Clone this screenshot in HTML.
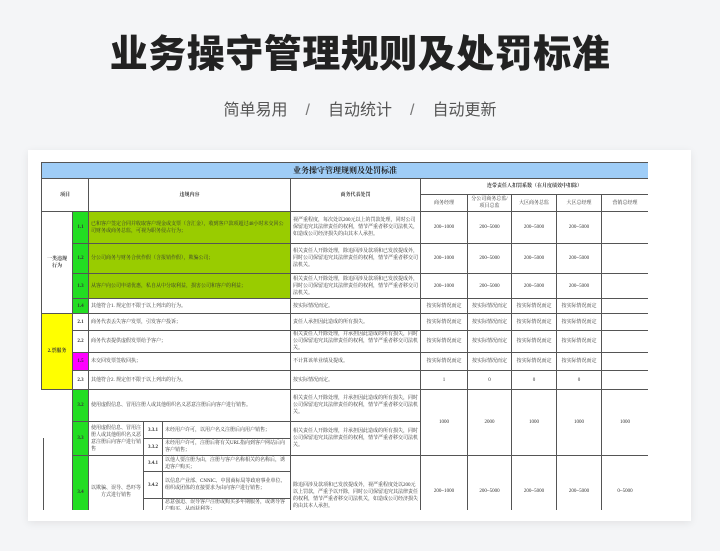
<!DOCTYPE html>
<html><head><meta charset="utf-8">
<style>
*{margin:0;padding:0;box-sizing:border-box}
body{width:720px;height:551px;background:#f4f5f7;position:relative;overflow:hidden;font-family:"Liberation Sans","Noto Sans CJK SC",sans-serif}
h1{position:absolute;top:31px;left:0;width:720px;text-align:center;font-size:38px;font-weight:900;color:#222;letter-spacing:0.5px;line-height:48px}
.sub{position:absolute;top:100px;left:0;width:720px;text-align:center;font-size:16px;color:#555;line-height:22px}
.sub span{margin:0 18px;color:#777}
.card{position:absolute;left:28px;top:150px;width:663px;height:371px;background:#fff;box-shadow:0 2px 8px rgba(0,0,0,.08)}
.wrap{position:absolute;left:41px;top:162px;width:607px;height:348px;overflow:hidden}
table{border-collapse:collapse;table-layout:fixed;width:607px;font-family:"Liberation Serif","Noto Serif CJK SC",serif;font-size:5px;color:#333;line-height:7px}
td{border:1px solid #555;text-align:center;vertical-align:middle;padding:0 2px;overflow:hidden}
.l{text-align:left}
.tt{background:#9fcdf7;font-size:8px;font-weight:bold;color:#222}
.g{background:#22dd22;font-weight:bold}
.yg{background:#99cc00;text-align:left}
.y{background:#ffff00;font-weight:bold}
.m{background:#ff00ff;font-weight:bold}
.b{font-weight:bold}
</style></head><body>
<h1>业务操守管理规则及处罚标准</h1>
<div class="sub">简单易用<span>/</span>自动统计<span>/</span>自动更新</div>
<div class="card"></div>
<div class="wrap">
<table>
<colgroup><col style="width:31px"><col style="width:16px"><col style="width:55px"><col style="width:19px"><col style="width:128px"><col style="width:130px"><col style="width:47px"><col style="width:44px"><col style="width:45px"><col style="width:45px"><col style="width:47px"></colgroup>
<tr style="height:16px"><td colspan="11" class="tt">业务操守管理规则及处罚标准</td></tr>
<tr style="height:16px"><td colspan="2" rowspan="2" class="b">项目</td><td colspan="3" rowspan="2" class="b">违规内容</td><td rowspan="2" class="b">商务代表处罚</td><td colspan="5" class="b">连带责任人扣罚系数（在月度绩效中扣除）</td></tr>
<tr style="height:17px"><td>商务经理</td><td>分公司商务总监/项目总监</td><td>大区商务总监</td><td>大区总经理</td><td>营销总经理</td></tr>
<tr style="height:32px"><td rowspan="4" class="b">一类违规<br>行为</td><td class="g">1.1</td><td colspan="3" class="yg">已和客户签定合同并收取客户现金或支票（含汇金），收到客户款项超过48小时未交回公司财务或商务总监，可视为职务侵占行为；</td><td class="l">视严重程度，每次处以200元以上的罚款处理，同时公司保留追究其法律责任的权利，情节严重者移交司法机关，如造成公司经济损失的由其本人承担。</td><td>200~1000</td><td>200~5000</td><td>200~5000</td><td>200~5000</td><td></td></tr>
<tr style="height:30px"><td class="g">1.2</td><td colspan="3" class="yg">分公司商务与财务合伙作假（含报销作假），欺骗公司；</td><td class="l">相关责任人开除处理，除追回涉及款项和已发放提成外，同时公司保留追究其法律责任的权利，情节严重者移交司法机关。</td><td>200~1000</td><td>200~5000</td><td>200~5000</td><td>200~5000</td><td></td></tr>
<tr style="height:25px"><td class="g">1.3</td><td colspan="3" class="yg">从客户向公司申请优惠，私自从中分取利益，损害公司和客户的利益；</td><td class="l">相关责任人开除处理，除追回涉及款项和已发放提成外，同时公司保留追究其法律责任的权利，情节严重者移交司法机关。</td><td>200~1000</td><td>200~5000</td><td>200~5000</td><td>200~5000</td><td></td></tr>
<tr style="height:15px"><td class="g">1.4</td><td colspan="3" class="l">其他符合1. 规定但不限于以上列出的行为。</td><td class="l">按实际情况而定。</td><td>按实际情况而定</td><td>按实际情况而定</td><td>按实际情况而定</td><td>按实际情况而定</td><td></td></tr>
<tr style="height:17px"><td rowspan="4" class="y">2.票服务</td><td class="b">2.1</td><td colspan="3" class="l">商务代表丢失客户发票，引发客户投诉；</td><td class="l">责任人承担因此造成的所有损失。</td><td>按实际情况而定</td><td>按实际情况而定</td><td>按实际情况而定</td><td>按实际情况而定</td><td></td></tr>
<tr style="height:22px"><td class="b">2.2</td><td colspan="3" class="l">商务代表提供虚假发票给予客户；</td><td class="l">相关责任人开除处理，并承担因此造成的所有损失，同时公司保留追究其法律责任的权利，情节严重者移交司法机关。</td><td>按实际情况而定</td><td>按实际情况而定</td><td>按实际情况而定</td><td>按实际情况而定</td><td></td></tr>
<tr style="height:18px"><td class="m">1.5</td><td colspan="3" class="l">未交回发票签收回执；</td><td class="l">不计算该单业绩及提成。</td><td>按实际情况而定</td><td>按实际情况而定</td><td>按实际情况而定</td><td>按实际情况而定</td><td></td></tr>
<tr style="height:19px"><td class="b">2.3</td><td colspan="3" class="l">其他符合2. 规定但不限于以上列出的行为。</td><td class="l">按实际情况而定。</td><td>1</td><td>0</td><td>0</td><td>0</td><td></td></tr>
<tr style="height:32px"><td rowspan="6" style="border-top:1px solid #555;border-bottom:none;border-left:none;background:linear-gradient(90deg,transparent 0,transparent 1px,#555 1px,#555 2px,transparent 2px) no-repeat 0 48px/100% 100%"></td><td class="g">3.2</td><td colspan="3" class="l">使用虚假信息、冒用注册人或其他组织名义恶意注册后向客户进行销售。</td><td class="l">相关责任人开除处理，并承担因此造成的所有损失，同时公司保留追究其法律责任的权利，情节严重者移交司法机关。</td><td rowspan="3">1000</td><td rowspan="3">2000</td><td rowspan="3">1000</td><td rowspan="3">1000</td><td rowspan="3">1000</td></tr>
<tr style="height:17px"><td rowspan="2" class="g">3.3</td><td rowspan="2" class="l">使用虚假信息、冒用注册人或其他组织名义恶意注册后向客户进行销售</td><td class="b">3.3.1</td><td class="l">未经用户许可，以用户名义注册后向用户销售；</td><td rowspan="2" class="l">相关责任人开除处理，并承担因此造成的所有损失，同时公司保留追究其法律责任的权利，情节严重者移交司法机关。</td></tr>
<tr style="height:17px"><td class="b">3.3.2</td><td class="l">未经用户许可，注册后将有关URL指向到客户网站后向客户销售；</td></tr>
<tr style="height:16px"><td rowspan="3" class="g">3.4</td><td rowspan="3">以欺骗、误导、恐吓等方式进行销售</td><td class="b">3.4.1</td><td class="l">以他人要注册为由，注册与客户名称相关的名称后，诱迫客户购买；</td><td rowspan="3" class="l" style="vertical-align:top;padding-top:26px">除追回涉及款项和已发放提成外，视严重程度处以200元以上罚款，严重予以开除，同时公司保留追究其法律责任的权利，情节严重者移交司法机关，如造成公司经济损失的由其本人承担。</td><td rowspan="3" style="vertical-align:top;padding-top:32px">200~1000</td><td rowspan="3" style="vertical-align:top;padding-top:32px">200~5000</td><td rowspan="3" style="vertical-align:top;padding-top:32px">200~5000</td><td rowspan="3" style="vertical-align:top;padding-top:32px">200~5000</td><td rowspan="3" style="vertical-align:top;padding-top:32px">0~5000</td></tr>
<tr style="height:27px"><td class="b">3.4.2</td><td class="l">以信息产业部、CNNIC、中国商标局等政府事业单位、组织或团体的直接要求为由向客户进行销售；</td></tr>
<tr style="height:30px"><td></td><td class="l" style="vertical-align:top">恶意强迫、误导客户注册或购买多年期服务，或诱导客户购买，从而获利等；</td></tr>
</table>
</div>
</body></html>
